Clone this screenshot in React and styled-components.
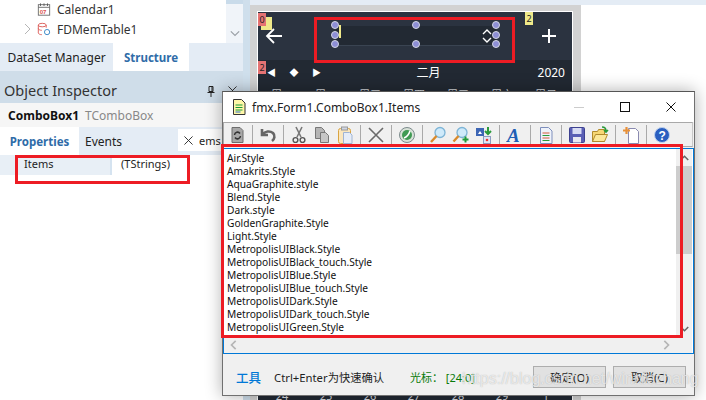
import React from "react";
import styled, { createGlobalStyle } from "styled-components";

const UI_FONT = `"Noto Sans", "Noto Sans CJK SC", sans-serif`;
const STYLES = [
  "Air.Style",
  "Amakrits.Style",
  "AquaGraphite.style",
  "Blend.Style",
  "Dark.style",
  "GoldenGraphite.Style",
  "Light.Style",
  "MetropolisUIBlack.Style",
  "MetropolisUIBlack_touch.Style",
  "MetropolisUIBlue.Style",
  "MetropolisUIBlue_touch.Style",
  "MetropolisUIDark.Style",
  "MetropolisUIDark_touch.Style",
  "MetropolisUIGreen.Style",
];
const WEEK = ["周一", "周二", "周三", "周四", "周五", "周六", "周日"];
const LAST_ROW = ["24", "25", "26", "27", "28", "29", "1"];

const GlobalStyle = createGlobalStyle`
  html, body { margin: 0; padding: 0; background: #fff; }
  * { box-sizing: border-box; }
`;

const Page = styled.div`
  position: relative;
  display: flex;
  width: 706px;
  height: 400px;
  overflow: hidden;
  font-family: ${UI_FONT};
  color: #1e1e1e;
`;

/* left dock */
const Dock = styled.div`
  display: flex;
  flex-direction: column;
  width: 243px;
  flex: none;
  background: #fff;
`;
const TreeArea = styled.div`
  display: flex;
  height: 43px;
  background: #fff;
`;
const TreeList = styled.div`
  flex: 1;
  margin-top: -1px;
  padding-left: 24px;
`;
const TreeRow = styled.div`
  display: flex;
  align-items: center;
  gap: 6px;
  height: 20px;
  padding-left: ${(p) => p.$indent || 0}px;
  font-size: 12px;
  color: #333;
  svg { flex: none; }
`;
const TreeScroll = styled.div`
  display: flex;
  flex-direction: column;
  justify-content: space-between;
  align-items: center;
  width: 17px;
  background: #f0f4f9;
  padding-bottom: 5px;
`;
const ScrollThumb = styled.div`
  width: 100%;
  height: 4px;
  background: #c9dbea;
`;
const TabBar = styled.div`
  display: flex;
  height: 28px;
  background: #e4ecf5;
`;
const Tab = styled.div`
  display: flex;
  align-items: center;
  justify-content: center;
  width: ${(p) => p.$w}px;
  font-size: ${(p) => (p.$active ? 11.5 : 12)}px;
  font-weight: ${(p) => (p.$active ? 700 : 400)};
  color: ${(p) => (p.$active ? "#2f6ca8" : "#222")};
  background: ${(p) => (p.$active ? "#fff" : "transparent")};
`;
const InspectorHead = styled.div`
  display: flex;
  align-items: flex-end;
  justify-content: space-between;
  height: 32px;
  padding: 0 6px 3px 4px;
  background: #cfdde9;
  font-size: 14.5px;
  color: #333;
`;
const HeadIcons = styled.div`
  display: flex;
  gap: 13px;
  margin-bottom: 3px;
`;
const Selected = styled.div`
  display: flex;
  align-items: center;
  gap: 6px;
  height: 24px;
  padding-left: 8px;
  background: #f6f6f6;
  font-size: 12px;
  b { color: #111; }
  span { color: #888; }
`;
const FilterBox = styled.div`
  display: flex;
  align-items: center;
  gap: 6px;
  width: 65px;
  height: 22px;
  margin: 2px 0 0 50px;
  padding-left: 6px;
  background: #fff;
  font-size: 11px;
`;
const PropRow = styled.div`
  display: flex;
  height: 20px;
  background: #e8eff6;
  font-size: 11px;
`;
const PropName = styled.div`
  width: 112px;
  padding-left: 24px;
  line-height: 17px;
  border-right: 2px solid #d5e3f0;
`;
const PropValue = styled.div`
  flex: 1;
  padding-left: 9px;
  line-height: 17px;
  background: #fff;
`;

const Splitter = styled.div`
  width: 7px;
  flex: none;
  background: #cfdfec;
`;

/* form designer */
const Designer = styled.div`
  flex: 1;
  display: flex;
  flex-direction: column;
  background: #fff;
`;
const TopStrip = styled.div`
  height: 5px;
  flex: none;
  background: #e4ecf5;
`;
const Surface = styled.div`
  flex: 1;
  width: 331px;
  padding: 6px 8px 0 7px;
  background: #d2d2d2;
  min-height: 0;
  overflow: hidden;
`;
const PhoneForm = styled.div`
  position: relative;
  height: 420px;
  border: 1px solid #fff;
  border-bottom: 0;
  background: #222933;
  color: #fff;
`;
const FormHeader = styled.div`
  display: flex;
  align-items: center;
  justify-content: space-between;
  height: 48px;
  padding: 0 15px 0 7px;
  background: #2b3340;
`;
const Combo = styled.div`
  position: relative;
  display: flex;
  align-items: center;
  justify-content: flex-end;
  width: 160px;
  height: 20px;
  margin-left: 8px;
  padding-right: 4px;
  background: #222933;
  border-bottom: 1px solid #3a4452;
`;
const Caret = styled.div`
  position: absolute;
  left: 3px;
  top: -1px;
  width: 2px;
  height: 13px;
  background: #efe98a;
`;
const Handle = styled.div`
  position: absolute;
  left: ${(p) => p.$x}px;
  top: ${(p) => p.$y}px;
  width: 8px;
  height: 8px;
  border-radius: 50%;
  border: 1px solid #d3d6e2;
  background: #8e8fd6;
`;
const DesignTag = styled.div`
  position: absolute;
  left: ${(p) => p.$x}px;
  top: ${(p) => p.$y}px;
  width: ${(p) => p.$w || 8}px;
  height: 13px;
  background: ${(p) => p.$bg};
  color: #222;
  font-size: 9px;
  line-height: 13px;
  text-align: center;
`;
const CalNav = styled.div`
  display: flex;
  align-items: center;
  height: 24px;
  margin-bottom: 2px;
  padding: 0 7px 0 9px;
  font-size: 12px;
`;
const NavGlyph = styled.span`
  width: 22.5px;
  font-size: 9px;
`;
const Month = styled.span`
  flex: 1;
  text-align: center;
  padding-right: 15px;
`;
const Year = styled.span`
  font-size: 12px;
`;
const DayGrid = styled.div`
  display: grid;
  grid-template-columns: repeat(7, 44px);
  padding-left: 2px;
  font-size: 11px;
  color: #d9dce0;
  text-align: center;
  margin-top: ${(p) => p.$top || 0}px;
`;

/* dialog */
const Dialog = styled.div`
  position: absolute;
  left: 222px;
  top: 91px;
  width: 473px;
  height: 305px;
  display: flex;
  flex-direction: column;
  background: #f0f0f0;
  border: 1px solid #707070;
  border-top-color: #555;
  box-shadow: 0 0 16px rgba(0, 0, 0, 0.32);
`;
const TitleBar = styled.div`
  display: flex;
  align-items: center;
  height: 30px;
  padding-left: 9px;
  gap: 6px;
  background: #fff;
  font-size: 12px;
  color: #222;
`;
const TitleText = styled.div`
  flex: 1;
`;
const WinButtons = styled.div`
  display: flex;
  align-items: center;
`;
const WinBtn = styled.div`
  display: flex;
  align-items: center;
  justify-content: center;
  width: 46px;
  height: 30px;
`;
const Toolbar = styled.div`
  display: flex;
  align-items: center;
  height: 25px;
  width: 470px;
  padding-left: 1px;
  background: #f0f0f0;
  border: 1px solid #a9a9a9;
  border-right-color: #c8c8c8;
`;
const ToolBtn = styled.div`
  display: flex;
  align-items: center;
  justify-content: center;
  width: 23px;
  height: 20px;
  flex: none;
`;
const ToolSep = styled.div`
  width: 1px;
  height: 20px;
  margin: 0 3.5px;
  background: #a9a9a9;
  flex: none;
`;
const Memo = styled.div`
  display: grid;
  grid-template-columns: 1fr 16px;
  grid-template-rows: 1fr 17px;
  height: 206px;
  margin-top: 1px;
  width: 471px;
  padding-right: 1px;
  border: 1px solid #0078d7;
  background: #fff;
`;
const MemoText = styled.div`
  padding: 3px 0 0 3px;
  font-size: 10.2px;
  line-height: 13px;
  color: #111;
  overflow: hidden;
  white-space: nowrap;
`;
const VScroll = styled.div`
  display: flex;
  flex-direction: column;
  align-items: center;
  background: #f0f0f0;
  padding: 5px 0 3px;
  svg { flex: none; }
`;
const VThumb = styled.div`
  width: 100%;
  height: 88px;
  margin: 3px 0 auto;
  background: #cdcdcd;
`;
const HScroll = styled.div`
  display: flex;
  align-items: center;
  justify-content: space-between;
  grid-column: 1 / 2;
  padding: 0 5px;
  background: #f0f0f0;
`;
const Corner = styled.div`
  background: #f0f0f0;
`;
const Footer = styled.div`
  flex: 1;
  display: flex;
  align-items: center;
  padding: 5px 8px 0 13px;
  font-size: 11px;
`;
const ToolsLink = styled.span`
  width: 38px;
  font-size: 12.5px;
  font-weight: 500;
  color: #0078d7;
`;
const Hint = styled.span`
  width: 136px;
  font-size: 11.3px;
`;
const Cursor = styled.span`
  flex: 1;
  color: #0a7a0a;
`;
const FootBtn = styled.div`
  display: flex;
  align-items: center;
  justify-content: center;
  width: 73px;
  height: 22px;
  margin-left: 7px;
  background: #e1e1e1;
  border: 1px solid #adadad;
  font-size: 11.5px;
`;

/* annotations lying over the screenshot */
const RedBox = styled.div`
  position: absolute;
  left: ${(p) => p.$x}px;
  top: ${(p) => p.$y}px;
  width: ${(p) => p.$w}px;
  height: ${(p) => p.$h}px;
  border: 3px solid #ed1c24;
  pointer-events: none;
`;
const Watermark = styled.div`
  position: absolute;
  left: 462px;
  top: 370px;
  font-family: "Liberation Sans", sans-serif;
  font-size: 16px;
  white-space: nowrap;
  color: rgba(255, 255, 255, 0.68);
  text-shadow: 0 0 1px rgba(120, 120, 120, 0.55);
`;

const CalendarIcon = () => (
  <svg width="14" height="15" viewBox="0 0 16 16">
    <rect x="1.5" y="2.5" width="13" height="12" fill="#fff" stroke="#666" />
    <path d="M1.5 5.5h13" stroke="#666" />
    <path d="M4 1v3M8 1v3M12 1v3" stroke="#555" />
    <text x="3" y="13" fontSize="7" fontWeight="700" fill="#d9534f" fontFamily="Liberation Sans">07</text>
  </svg>
);
const TableIcon = () => (
  <svg width="14" height="14" viewBox="0 0 16 16" fill="none">
    <ellipse cx="6" cy="3.5" rx="4.5" ry="2" stroke="#d9534f" />
    <path d="M1.5 3.5v9c0 1 2 2 4 2M1.5 7.5c0 1 2 2 4 2M10.5 3.5v3" stroke="#d9534f" />
    <circle cx="11.5" cy="11.5" r="3" stroke="#2a7fc1" />
  </svg>
);
const TreeExpander = () => (
  <svg width="7" height="12" viewBox="0 0 7 12" fill="none">
    <path d="M1 1l5 5-5 5" stroke="#b5b5b5" />
  </svg>
);
const Chevron = ({ dir = "down", color = "#8a8a8a", size = 12, w = 1.4 }) => (
  <svg width={size} height={size} viewBox="0 0 12 12" fill="none">
    <path
      d={dir === "down" ? "M1 4l5 5 5-5" : dir === "right" ? "M4 1l5 5-5 5" : dir === "left" ? "M8 1L3 6l5 5" : "M1 8l5-5 5 5"}
      stroke={color}
      strokeWidth={w}
    />
  </svg>
);
const Cross = ({ size = 10, color = "#222", w = 1 }) => (
  <svg width={size} height={size} viewBox="0 0 10 10">
    <path d="M0.5 0.5l9 9M9.5 0.5l-9 9" stroke={color} strokeWidth={w} />
  </svg>
);
const Pin = () => (
  <svg width="8" height="11" viewBox="0 0 8 11" fill="none">
    <path d="M2 .5h4v5h-4zM.5 6.5h7M4 7v4M5 1v4" stroke="#222" />
  </svg>
);
const NoteIcon = () => (
  <svg width="14" height="16" viewBox="0 0 14 16">
    <path d="M1.5.5h8l3.5 3.5v11.5H1.5z" fill="#fff7a8" stroke="#333" />
    <path d="M3.5 6h7M3.5 8.5h7M3.5 11h7" stroke="#1a9a3a" />
    <path d="M3.5 13h5" stroke="#2a6fd0" />
  </svg>
);

// each toolbar picture is its own little svg, keyed by name
const TOOL_PATHS = {
  refresh: (
    <>
      <path d="M4 1.5h8l3 3v12H4z" fill="#a8a8a8" stroke="#6d6d6d" />
      <path d="M6.5 9a3 3 0 0 1 5.5-1.5M12.5 10a3 3 0 0 1-5.5 1.5" stroke="#333" strokeWidth="1.5" fill="none" />
    </>
  ),
  undo: <path d="M3 3v6h6M3.5 8.5C6 5 11 4.5 14 7c2.5 2.5 1.5 6-1 8" fill="none" stroke="#666" strokeWidth="2.6" />,
  cut: (
    <>
      <path d="M6 1l5 10M12 1L7 11" stroke="#777" strokeWidth="1.6" />
      <circle cx="5.5" cy="14" r="2.4" fill="none" stroke="#555" strokeWidth="1.4" />
      <circle cx="12.5" cy="14" r="2.4" fill="none" stroke="#555" strokeWidth="1.4" />
    </>
  ),
  copy: (
    <>
      <path d="M2.5 1.5h6l3 3v8h-9z" fill="#b5b5b5" stroke="#777" />
      <path d="M7.5 6.5h5l3 3v7h-8z" fill="#c6c6c6" stroke="#777" />
    </>
  ),
  paste: (
    <>
      <rect x="2.5" y="2.5" width="12" height="15" rx="2" fill="#fbe7be" stroke="#d9a441" />
      <path d="M7.5 6.5h6l2.5 2.5v8.5H7.5z" fill="#e6edf8" stroke="#9fb4d4" />
      <rect x="5.5" y="1" width="6" height="3" fill="#cfd6e4" stroke="#9a9a9a" />
    </>
  ),
  del: <path d="M2 2l14 14M16 2L2 16" stroke="#6a6a6a" strokeWidth="1.6" />,
  globe: (
    <>
      <circle cx="9" cy="9" r="7.5" fill="#d8e2d8" stroke="#7c8a8c" />
      <circle cx="9" cy="9" r="5" fill="#3f9a53" />
      <path d="M6 12c3-1 5-4 6-7" stroke="#fff" strokeWidth="1.6" fill="none" />
    </>
  ),
  find: (
    <>
      <circle cx="11" cy="6.5" r="5" fill="#cfeafa" stroke="#7db4d6" strokeWidth="1.3" />
      <path d="M7.5 10L2 16" stroke="#d98a2b" strokeWidth="2.4" />
    </>
  ),
  findNext: (
    <>
      <circle cx="10" cy="6.5" r="5" fill="#cfeafa" stroke="#7db4d6" strokeWidth="1.3" />
      <path d="M6.5 10L1.5 15.5" stroke="#d98a2b" strokeWidth="2.4" />
      <path d="M13.5 10.5v6M10.5 13.5h6" stroke="#1f9a3a" strokeWidth="2" />
    </>
  ),
  replace: (
    <>
      <rect x="1" y="2" width="8" height="8" fill="#3d66b5" />
      <path d="M3 8l2-3 2 3z" fill="#fff" />
      <path d="M13 1v6M10 5l3 3 3-3" stroke="#2a9a3a" strokeWidth="2" fill="none" />
      <rect x="8.5" y="10.5" width="7" height="7" fill="#dfe6f4" stroke="#8b9cc0" />
      <circle cx="12" cy="14" r="1.3" fill="#e33" />
    </>
  ),
  font: (
    <text x="1" y="16" fontSize="19" fontWeight="700" fontStyle="italic" fontFamily="Liberation Serif" fill="#1f5fb5">A</text>
  ),
  lines: (
    <>
      <path d="M3.5 1.5h8l3.5 3.5v12.5h-11.5z" fill="#eef2fa" stroke="#7e8fbc" />
      <path d="M5.5 7h7" stroke="#d65a3a" />
      <path d="M5.5 9.5h7" stroke="#2a9a3a" />
      <path d="M5.5 12h7" stroke="#d65a3a" />
      <path d="M5.5 14.5h7" stroke="#2a9a3a" />
    </>
  ),
  save: (
    <>
      <rect x="1.5" y="1.5" width="15" height="15" rx="1" fill="#5a5fb5" stroke="#3d4190" />
      <rect x="4.5" y="2" width="9" height="6" fill="#d8dcf4" />
      <rect x="5" y="11" width="8" height="5.5" fill="#e9e9f2" />
    </>
  ),
  open: (
    <>
      <path d="M1.5 5.5h5l1-2h6v12h-12z" fill="#f6d774" stroke="#b08a2c" />
      <path d="M1.5 15.5l3-7h12l-3 7z" fill="#fbe89a" stroke="#b08a2c" />
      <path d="M11 1c3 0 4 1.500 4 4M13 4l2 2 2-2" stroke="#2a9a3a" strokeWidth="1.6" fill="none" />
    </>
  ),
  newFile: (
    <>
      <path d="M6.500 2.500h7l3 3v12h-10z" fill="#fff" stroke="#8a8ab0" />
      <path d="M4.500 1v7M1 4.500h7" stroke="#e8913a" strokeWidth="2.2" />
    </>
  ),
  help: (
    <>
      <circle cx="9" cy="9" r="7.500" fill="#2a5fc0" stroke="#bcd0ee" />
      <text x="5.500" y="13.500" fontSize="12" fontWeight="700" fontFamily="Liberation Sans" fill="#fff">?</text>
    </>
  ),
};
const TOOLBAR = [
  ["refresh"],
  ["undo"],
  ["cut", "copy", "paste"],
  ["del"],
  ["globe"],
  ["find", "findNext", "replace"],
  ["font"],
  ["lines"],
  ["save", "open"],
  ["newFile"],
  ["help"],
];

const ToolIcon = ({ name }) => (
  <ToolBtn>
    <svg width="18" height="18" viewBox="0 0 18 18">{TOOL_PATHS[name]}</svg>
  </ToolBtn>
);

const App = () => {
  const handles = [
    [-5, -5], [76, -5], [156, -5],
    [-5, 5], [156, 5],
    [-5, 14], [76, 14], [156, 14],
  ];

  return (
    <Page>
      <GlobalStyle />
      <Dock>
        <TreeArea>
          <TreeList>
            <TreeRow $indent={13}>
              <CalendarIcon />
              Calendar1
            </TreeRow>
            <TreeRow>
              <TreeExpander />
              <TableIcon />
              FDMemTable1
            </TreeRow>
          </TreeList>
          <TreeScroll>
            <ScrollThumb />
            <Chevron color="#9aa0a6" size={10} />
          </TreeScroll>
        </TreeArea>
        <TabBar>
          <Tab $w={113}>DataSet Manager</Tab>
          <Tab $w={76} $active>Structure</Tab>
        </TabBar>
        <InspectorHead>
          Object Inspector
          <HeadIcons>
            <Pin />
            <Cross size={9} />
          </HeadIcons>
        </InspectorHead>
        <Selected>
          <b>ComboBox1</b>
          <span>TComboBox</span>
        </Selected>
        <TabBar>
          <Tab $w={79} $active>Properties</Tab>
          <Tab $w={49}>Events</Tab>
          <FilterBox>
            <Cross size={9} />
            ems
          </FilterBox>
        </TabBar>
        <PropRow>
          <PropName>Items</PropName>
          <PropValue>(TStrings)</PropValue>
        </PropRow>
      </Dock>
      <Splitter />
      <Designer>
        <TopStrip />
        <Surface>
          <PhoneForm>
            <FormHeader>
              <svg width="18" height="18" viewBox="0 0 18 18" fill="none">
                <path d="M17 9H2M9 2L2 9l7 7" stroke="#fff" strokeWidth="1.8" />
              </svg>
              <Combo>
                <Caret />
                <svg width="10" height="14" viewBox="0 0 10 14" fill="none">
                  <path d="M1 5l4-4 4 4M1 9l4 4 4-4" stroke="#fff" strokeWidth="1.4" />
                </svg>
                {handles.map(([x, y]) => (
                  <Handle key={`${x}-${y}`} $x={x} $y={y} />
                ))}
              </Combo>
              <svg width="16" height="16" viewBox="0 0 16 16">
                <path d="M8 1v14M1 8h14" stroke="#fff" strokeWidth="2" />
              </svg>
            </FormHeader>
            <CalNav>
              <NavGlyph>◀</NavGlyph>
              <NavGlyph>◆</NavGlyph>
              <NavGlyph>▶</NavGlyph>
              <Month>二月</Month>
              <Year>2020</Year>
            </CalNav>
            <DayGrid>
              {WEEK.map((d) => (
                <span key={d}>{d}</span>
              ))}
            </DayGrid>
            <DayGrid $top={286}>
              {LAST_ROW.map((d) => (
                <span key={d}>{d}</span>
              ))}
            </DayGrid>
            <DesignTag $x={3} $y={5} $w={11} $bg="#efe98a" />
            <DesignTag $x={0} $y={1} $bg="#e57373">0</DesignTag>
            <DesignTag $x={0} $y={49} $bg="#e57373">2</DesignTag>
            <DesignTag $x={267} $y={0} $bg="#efe98a">2</DesignTag>
          </PhoneForm>
        </Surface>
      </Designer>

      <Dialog>
        <TitleBar>
          <NoteIcon />
          <TitleText>fmx.Form1.ComboBox1.Items</TitleText>
          <WinButtons>
            <WinBtn>
              <svg width="10" height="1"><rect width="10" height="1" fill="#ccc" /></svg>
            </WinBtn>
            <WinBtn>
              <svg width="10" height="10"><rect x="0.5" y="0.5" width="9" height="9" fill="none" stroke="#111" /></svg>
            </WinBtn>
            <WinBtn>
              <Cross size={10} color="#111" />
            </WinBtn>
          </WinButtons>
        </TitleBar>
        <Toolbar>
          {TOOLBAR.map((group, i) => (
            <React.Fragment key={group[0]}>
              {i > 0 && <ToolSep />}
              {group.map((name) => (
                <ToolIcon key={name} name={name} />
              ))}
            </React.Fragment>
          ))}
        </Toolbar>
        <Memo>
          <MemoText>
            {STYLES.map((s) => (
              <div key={s}>{s}</div>
            ))}
          </MemoText>
          <VScroll>
            <Chevron dir="up" color="#666" size={9} w={2} />
            <VThumb />
            <Chevron color="#666" size={9} w={2} />
          </VScroll>
          <HScroll>
            <Chevron dir="left" color="#b5b5b5" size={10} w={2} />
            <Chevron dir="right" color="#b5b5b5" size={10} w={2} />
          </HScroll>
          <Corner />
        </Memo>
        <Footer>
          <ToolsLink>工具</ToolsLink>
          <Hint>Ctrl+Enter为快速确认</Hint>
          <Cursor>光标： [24:0]</Cursor>
          <FootBtn>确定(O)</FootBtn>
          <FootBtn>取消(C)</FootBtn>
        </Footer>
      </Dialog>

      <RedBox $x={15} $y={155} $w={175} $h={29} />
      <RedBox $x={314} $y={17} $w={201} $h={46} />
      <RedBox $x={221} $y={144} $w={462} $h={194} />
      <Watermark>https://blog.csdn.net/winniezhang</Watermark>
    </Page>
  );
};

export default App;
